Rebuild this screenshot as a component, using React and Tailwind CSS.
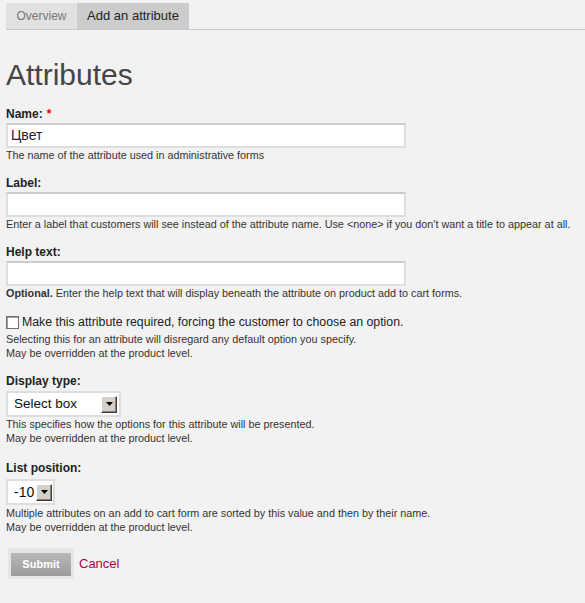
import React from "react";

function Arrow() {
  return (
    <span className="flex h-[17px] w-[16px] items-center justify-center border border-t-white border-l-white border-r-[#404040] border-b-[#404040] bg-[#d4d0c8] shadow-[inset_-1px_-1px_0_#808080]">
      <svg width="7" height="4" viewBox="0 0 7 4">
        <path d="M0 0h7L3.5 4z" fill="#000" />
      </svg>
    </span>
  );
}

function Field({ label, required, value, children }) {
  return (
    <div className="mt-[13px]">
      <label className="block text-[12px] font-bold leading-[17px] text-[#222]">
        {label}
        {required && <span className="ml-1 text-[#e00]">*</span>}
      </label>
      <div className="flex h-[25px] w-[400px] items-center border-2 border-[#dedede] border-t-[#cccccc] bg-white px-[3px] text-[14px] text-[#2a1a3a]">
        {value}
      </div>
      {children}
    </div>
  );
}

function Desc({ children, className = "" }) {
  return (
    <div className={"text-[10.8px] leading-[14px] text-[#333] " + className}>
      {children}
    </div>
  );
}

export default function App() {
  return (
    <div
      className="min-h-[603px] bg-[#f2f2f2] pl-[6px] pt-[3px]"
      style={{ fontFamily: '"Liberation Sans", Arial, sans-serif' }}
    >
      <div className="flex h-[27px] border-b border-[#c8c8c8]">
        <div className="flex w-[71px] items-center justify-center bg-[#e1e1e1] text-[12px] text-[#777]">
          Overview
        </div>
        <div className="flex w-[112px] items-center justify-center bg-[#cccccc] text-[13px] text-[#222]">
          Add an attribute
        </div>
      </div>

      <h1 className="mt-[30px] text-[30px] leading-[30px] text-[#454545]">
        Attributes
      </h1>

      <div className="-mt-[14px] pt-[17px]">
        <Field label="Name:" required value="Цвет">
          <Desc>The name of the attribute used in administrative forms</Desc>
        </Field>
        <Field label="Label:">
          <Desc>
            Enter a label that customers will see instead of the attribute
            name. Use &lt;none&gt; if you don't want a title to appear at all.
          </Desc>
        </Field>
        <Field label="Help text:">
          <Desc>
            <b>Optional.</b> Enter the help text that will display beneath
            the attribute on product add to cart forms.
          </Desc>
        </Field>

        <div className="mt-[13px]">
          <label className="flex items-center text-[12.3px] leading-[19px] text-[#222]">
            <span className="mr-[3px] h-[13px] w-[13px] border border-[#707070] bg-white shadow-[inset_1px_1px_0_#a0a0a0]" />
            Make this attribute required, forcing the customer to choose an
            option.
          </label>
          <Desc>
            Selecting this for an attribute will disregard any default option
            you specify.
            <br />
            May be overridden at the product level.
          </Desc>
        </div>

        <div className="mt-[13px]">
          <label className="block text-[12px] font-bold leading-[17px] text-[#222]">
            Display type:
          </label>
          <div className="mt-[1px] flex h-[26px] w-[115px] items-center justify-between border-2 border-[#dedede] bg-white pl-[6px] pr-[2px] text-[13.5px] text-[#111]">
            <span>Select box</span>
            <Arrow />
          </div>
          <Desc>
            This specifies how the options for this attribute will be
            presented.
            <br />
            May be overridden at the product level.
          </Desc>
        </div>

        <div className="mt-[15px]">
          <label className="block text-[12px] font-bold leading-[17px] text-[#222]">
            List position:
          </label>
          <div className="mt-[2px] flex h-[26px] w-[49px] items-center justify-between border-2 border-[#dedede] bg-white pl-[6px] pr-[1px] text-[14px] text-[#111]">
            <span>-10</span>
            <Arrow />
          </div>
          <Desc className="mt-[1px]">
            Multiple attributes on an add to cart form are sorted by this
            value and then by their name.
            <br />
            May be overridden at the product level.
          </Desc>
        </div>

        <div className="mt-[14px] flex items-center pl-[2px]">
          <div className="bg-[#e6e6e6] p-[3px]">
            <button className="h-[23px] w-[60px] bg-gradient-to-b from-[#b8b8b8] to-[#9c9c9c] text-[11px] font-bold text-white">
              Submit
            </button>
          </div>
          <a className="ml-[5px] text-[13px] text-[#b00050]" href="#">
            Cancel
          </a>
        </div>
      </div>
    </div>
  );
}
